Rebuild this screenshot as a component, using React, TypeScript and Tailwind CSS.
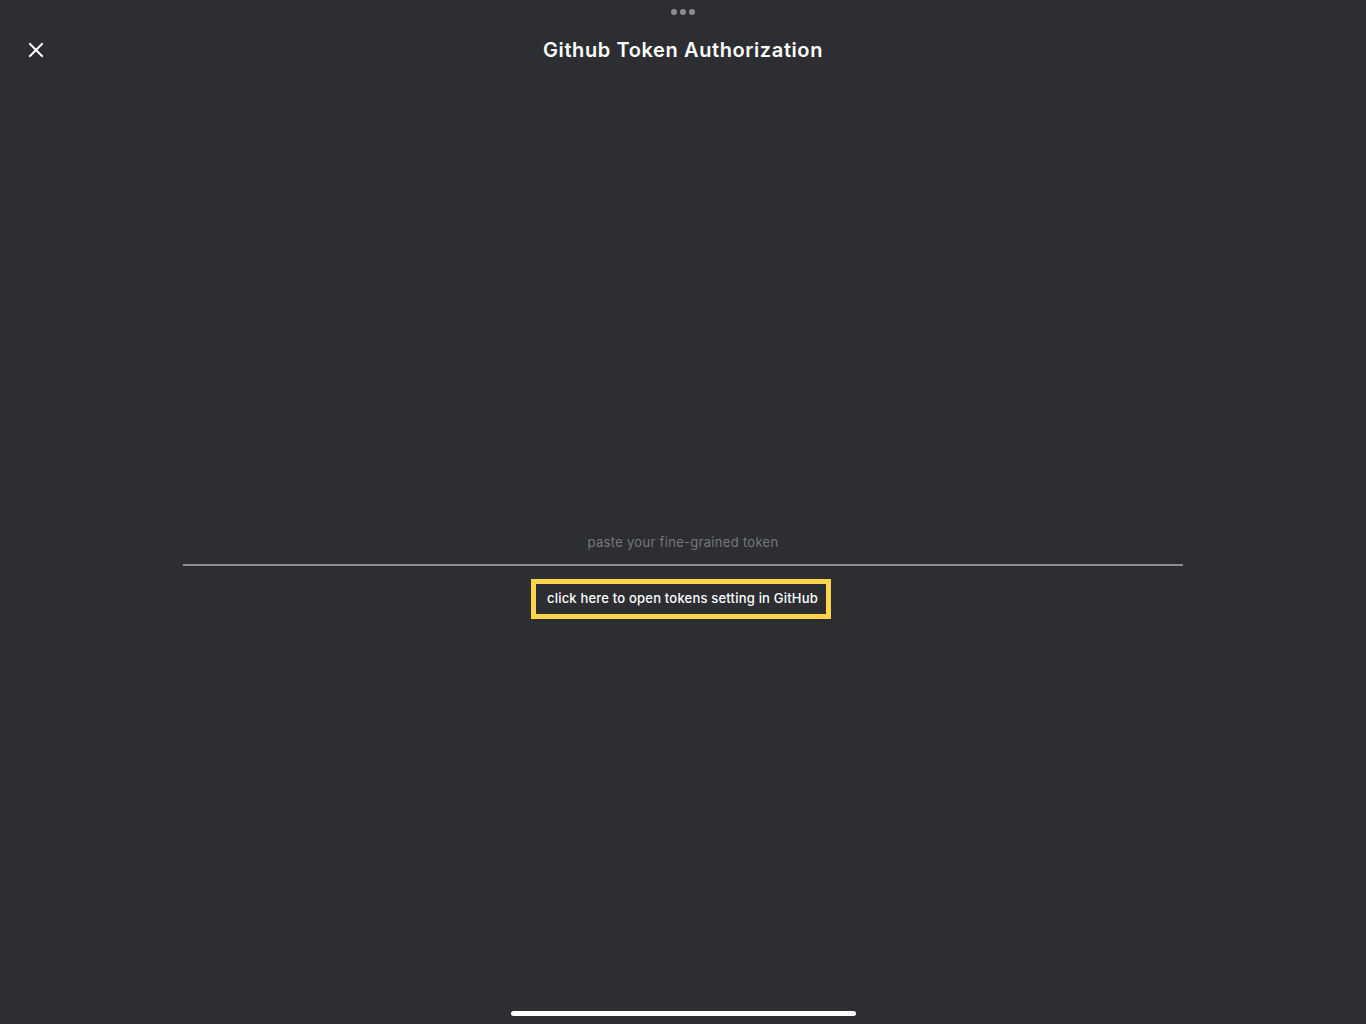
import React, { useState } from 'react';

export default function App() {
  const [token, setToken] = useState('');

  return (
    <div
      className="min-h-[1024px] w-full bg-[#2d2e32] flex flex-col text-white"
      style={{ fontFamily: 'Inter, "Open Sans", sans-serif' }}
    >
      {/* Window grabber dots */}
      <div className="flex justify-center gap-[3px] pt-[9px] h-[16px]">
        <span className="w-[6px] h-[6px] rounded-full bg-[#8b8c90]" />
        <span className="w-[6px] h-[6px] rounded-full bg-[#8b8c90]" />
        <span className="w-[6px] h-[6px] rounded-full bg-[#8b8c90]" />
      </div>

      {/* Header */}
      <div className="relative flex items-center justify-center h-[68px]">
        <button className="absolute left-[26px] top-[24px] w-[20px] h-[20px] flex items-center justify-center">
          <svg width="16" height="16" viewBox="0 0 16 16" fill="none">
            <path d="M2 2L14 14M14 2L2 14" stroke="white" strokeWidth="2" strokeLinecap="square" />
          </svg>
        </button>
        <h1 className="text-[20px] font-semibold tracking-[0.6px] mt-[-1px]">Github Token Authorization</h1>
      </div>

      {/* Token input */}
      <div className="flex flex-col items-center pt-[442px]">
        <input
          value={token}
          onChange={(e) => setToken(e.target.value)}
          placeholder="paste your fine-grained token"
          className="w-[1000px] h-[40px] bg-transparent text-center text-[13px] tracking-[0.3px] text-white placeholder:text-[#76777b] outline-none border-b-2 border-[#8e8e90] pb-[7px]"
        />
        <a
          href="#"
          className="mt-[13px] mr-[5px] w-[300px] h-[40px] border-[5px] border-[#fdd44c] flex items-center justify-center pl-[4px] text-[13px] font-medium tracking-[0.2px] text-white"
        >
          click here to open tokens setting in GitHub
        </a>
      </div>

      {/* Home indicator */}
      <div className="mt-auto flex justify-center pb-[8px]">
        <div className="w-[345px] h-[5px] rounded-full bg-white" />
      </div>
    </div>
  );
}
